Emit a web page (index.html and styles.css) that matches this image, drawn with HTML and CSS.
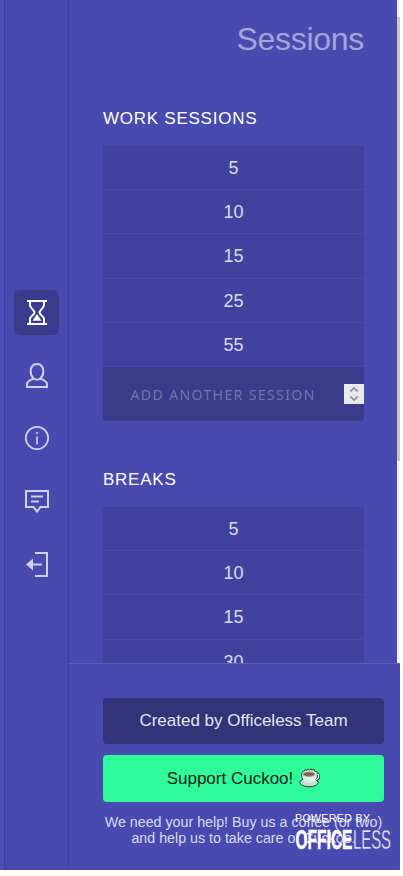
FILE: index.html
```
<!DOCTYPE html>
<html lang="en">
<head>
<meta charset="utf-8">
<title>Sessions</title>
<link rel="stylesheet" href="styles.css">
</head>
<body>
<div class="app">
  <nav class="rail">
    <a class="rail-item active"><svg width="24" height="28" viewBox="0 0 24 28" fill="none" stroke="currentColor" stroke-width="2"><path d="M2 3h20M2 26h20M5 3v4c0 3.500 4.500 5 4.500 7.500S5 18 5 21v5M19 3v4c0 3.500-4.500 5-4.500 7.500S19 18 19 21v5"/><path d="M12 16l4.500 6.800h-9z" fill="currentColor" stroke="none"/></svg></a>
    <a class="rail-item"><svg width="24" height="28" viewBox="0 -1 24 28" fill="none" stroke="currentColor" stroke-width="2"><path d="M12 2c-4 0-6.300 3-6.300 7.500 0 3.200 1.300 5.600 3 7C5 18.500 2 19.500 2 22v3h20v-3c0-2.500-3-3.500-6.700-5.500 1.700-1.400 3-3.800 3-7C18.300 5 16 2 12 2zM8.700 16.500c2 1.500 4.600 1.500 6.600 0"/></svg></a>
    <a class="rail-item"><svg width="24" height="28" viewBox="0 0 24 28" fill="none" stroke="currentColor" stroke-width="2"><circle cx="12" cy="14" r="11.200" stroke-width="1.800"/><path d="M12 12.500v8M12 8v2" stroke-width="1.700"/></svg></a>
    <a class="rail-item"><svg width="24" height="28" viewBox="0 0 24 28" fill="none" stroke="currentColor" stroke-width="2"><path d="M1 4h22v16h-7.500L12 24.500 8.500 20H1z"/><path d="M6 9.500h12M6 14.500h8" stroke-width="1.800"/></svg></a>
    <a class="rail-item"><svg width="24" height="28" viewBox="0 0 24 28" fill="none" stroke="currentColor" stroke-width="2"><path d="M10 3h12v23H10M17 14.500H7"/><path d="M1 14.500L8 8.500v12z" fill="currentColor" stroke="none"/></svg></a>
  </nav>
  <main class="main">
    <div class="scroll">
      <div class="content">
        <h1>Sessions</h1>
        <h2>WORK SESSIONS</h2>
        <div class="list">
          <div class="row">5</div>
          <div class="row">10</div>
          <div class="row">15</div>
          <div class="row">25</div>
          <div class="row">55</div>
          <div class="add"><span>ADD ANOTHER SESSION</span><i class="spin"><svg width="20" height="20" viewBox="0 0 20 20" fill="none" stroke="#96969c" stroke-width="1.800"><path d="M6.200 7.500L10 4l3.800 3.500M6.200 12.500L10 16l3.800-3.500"/></svg></i></div>
        </div>
        <h2 class="breaks">BREAKS</h2>
        <div class="list">
          <div class="row">5</div>
          <div class="row">10</div>
          <div class="row">15</div>
          <div class="row">30</div>
        </div>
      </div>
      <div class="track"><div class="thumb"></div></div>
    </div>
    <footer class="foot">
      <a class="btn dark">Created by Officeless Team</a>
      <a class="btn green">Support Cuckoo!
        <svg class="cup" width="21" height="20" viewBox="0 0 21 20"><ellipse cx="10" cy="14.500" rx="9.200" ry="4.300" fill="#c8ded5" stroke="#263b35"/><path d="M16.500 6.500c4-1.500 4.500 3.500.5 5" fill="none" stroke="#263b35" stroke-width="3"/><path d="M16.500 6.500c4-1.500 4.500 3.500.5 5" fill="none" stroke="#d5eee2" stroke-width="1.300"/><path d="M3 5.500c0 5 2 9 7 9.500 5 0 8-4 8-9.500z" fill="#dcefe7"/><path d="M4 12C2.500 9 2 6 3 4.500L5.500 3 6 1.500 8 2.500l1-1.700 1.500 1.500L12 .8l1 1.400 1.800-1.200.7 2 2.500.7v2" fill="#dcefe7" stroke="#263b35" stroke-width=".9"/><ellipse cx="10" cy="6.200" rx="6.400" ry="2.800" fill="#9fb0a8"/><ellipse cx="10" cy="6.200" rx="5.600" ry="2" fill="#87663d"/></svg></a>
      <p>We need your help! Buy us a coffee (or two)<br>and help us to take care of Cuckoo.</p>
    </footer>
  </main>
  <div class="powered">
    <svg width="98" height="40" viewBox="0 0 98 40" fill="#fff">
      <text class="by" x="0" y="10" textLength="75">POWERED BY</text>
      <text class="brand bold" x="0.500" y="36.800" textLength="57" lengthAdjust="spacingAndGlyphs">OFFICE</text>
      <text class="brand thin" x="58" y="36.800" textLength="38" lengthAdjust="spacingAndGlyphs">LESS</text>
    </svg>
  </div>
</div>
</body>
</html>
```
FILE: styles.css
```
* { box-sizing: border-box; }
html, body { margin: 0; background: #fff; }
body { font-family: "Liberation Sans", Arial, sans-serif; overflow: hidden; }
.app {
  position: relative;
  display: flex;
  width: 400px;
  height: 870px;
  background: #484aaf;
  overflow: hidden;
}
.rail {
  width: 69px;
  flex: none;
  padding: 290px 9px 0 9px;
  display: flex;
  flex-direction: column;
  gap: 18px;
  border-left: 4px solid #4d4fbb;
  border-right: 1px solid #3f4198;
  box-shadow: inset 1px 0 #3f4198;
}
.rail-item {
  width: 45px;
  height: 45px;
  margin-left: 1px;
  padding-bottom: 1px;
  flex: none;
  display: flex;
  align-items: center;
  justify-content: center;
  border-radius: 6px;
  color: #d0d0ec;
}
.rail-item.active { background: #3a3b8b; color: #fff; }
.rail-item svg { display: block; }
.main { flex: 1; display: flex; flex-direction: column; min-width: 0; }
.scroll { height: 663px; display: flex; overflow: hidden; }
.content { flex: 1; padding: 0 33px 0 34px; }
.track { width: 3px; height: 663px; padding-top: 17px; background: #f1f1f1; }
.thumb { height: 444px; background: #c8c8c8; }
h1 {
  margin: 20px 0 0;
  height: 38px;
  font-size: 32px;
  line-height: 38px;
  font-weight: 400;
  text-align: right;
  color: #a3a4d7;
  letter-spacing: -0.3px;
}
h2 {
  margin: 51px 0 17px;
  height: 20px;
  font-size: 17px;
  line-height: 20px;
  font-weight: 400;
  letter-spacing: 0.75px;
  color: #fff;
}
h2.breaks { margin-top: 49px; }
.list { border-radius: 0 0 4px 4px; overflow: hidden; background: #41429d; }
.row {
  height: 44.2px;
  border-bottom: 1px solid #484aaf;
  font-size: 18px;
  line-height: 44px;
  text-align: center;
  color: #dadaef;
}
.add {
  height: 54px;
  display: flex;
  align-items: center;
  justify-content: space-between;
  padding-left: 27.5px;
  background: #3a3b8b;
  font: 14px/20px "Noto Sans", sans-serif;
  letter-spacing: 1.4px;
  color: #7374ad;
  white-space: nowrap;
}
.add span { padding-top: 2px; }
.spin { width: 20px; height: 20px; background: #e9e9ed; }
.spin svg { display: block; }
.foot {
  flex: 1;
  padding: 34px 16px 0 34px;
  border-top: 1px solid #6062b8;
}
.btn {
  display: flex;
  align-items: center;
  justify-content: center;
  gap: 6px;
  height: 46px;
  border-radius: 4px;
  font-size: 17px;
}
.dark { background: #323379; color: #e4e4f0; }
.green { height: 47px; margin-top: 11px; background: #2ffa99; color: #10231d; }
.cup { margin-bottom: 2px; }
.foot p {
  margin: 12px -8px 0;
  font-size: 14.25px;
  line-height: 16px;
  text-align: center;
  color: #dadaef;
}
.powered { position: absolute; left: 295px; top: 812px; }
.powered svg { display: block; }
.by { font-size: 10.5px; }
.brand { font-family: "Liberation Sans Narrow", "Liberation Sans", sans-serif; font-size: 27.5px; }
.bold { font-weight: 700; stroke: #fff; stroke-width: 0.4px; }
.thin { font-weight: 400; fill: #e4e4f4; stroke: #484aaf; stroke-width: 0.3px; }
```
